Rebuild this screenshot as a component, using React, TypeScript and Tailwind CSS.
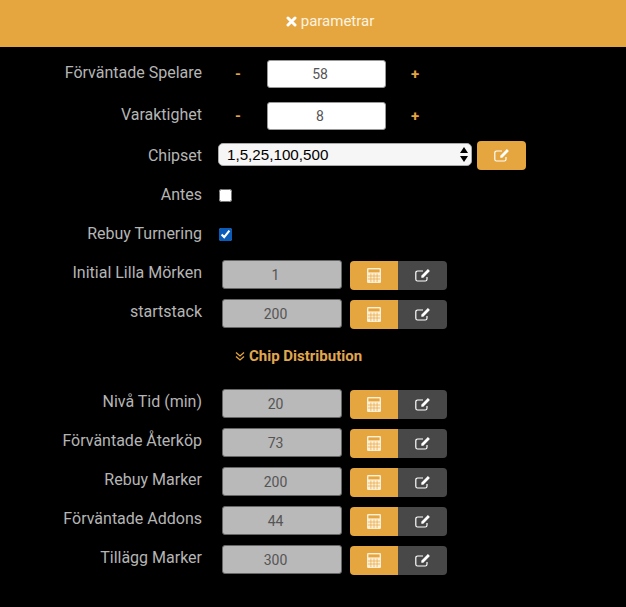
const CalcIcon = () => (
  <svg width="14" height="15" viewBox="0 0 14 15">
    <rect width="14" height="15" rx="1.2" fill="#fdf0d8" />
    <rect x="1.4" y="1.4" width="11.2" height="3" fill="#e5a63f" />
    <path d="M0.8 8h12.4M0.8 11h12.4M3.900 5.500v8.700M7 5.500v8.700M10.100 5.500v8.700" stroke="#e5a63f" strokeWidth="0.7" />
  </svg>
);

const EditIcon = () => (
  <svg width="16" height="14" viewBox="0 0 16 14" className="mb-[2px] fill-none stroke-white">
    <path d="M12 9v2.200a1.800 1.800 0 0 1-1.800 1.800H2.600A1.800 1.800 0 0 1 .8 11.200V4.800A1.800 1.800 0 0 1 2.600 3H8" strokeWidth="1.200" />
    <path d="M6.300 9.700V7.700L12.900 1.100 14.900 3.100 8.300 9.700z" className="fill-white stroke-none" />
  </svg>
);

const Label = ({ text, className }: { text: string; className?: string }) => (
  <label className={`block w-[202px] shrink-0 text-right text-[16px] leading-[20px] text-[#b5b5b5] ${className ?? ""}`}>
    {text}
  </label>
);

const StepperRow = ({ label, value }: { label: string; value: string }) => (
  <div className="flex items-center h-[28px] mb-[14px]">
    <Label text={label} className="mb-[2px]" />
    <span className="w-[65px] pl-[33px] text-[15px] font-bold text-[#e5a63f]">-</span>
    <input
      readOnly
      value={value}
      className="w-[119px] h-[28px] pr-[13px] rounded-[3px] bg-white text-center text-[14px] text-[#555] border border-[#999] outline-none"
    />
    <span className="ml-[25px] text-[15px] font-bold text-[#e5a63f]">+</span>
  </div>
);

const CalcRow = ({ label, value }: { label: string; value: string }) => (
  <div className="flex items-start h-[30px] mb-[9px]">
    <Label text={label} className="mt-[3px]" />
    <input
      readOnly
      value={value}
      className="ml-[20px] w-[120px] h-[29px] pr-[13px] rounded-[3px] bg-[#b9b9b9] text-center text-[14px] text-[#555] border border-[#666] outline-none"
    />
    <div className="ml-[8px] mt-[1px] flex h-[29px]">
      <button className="w-[48px] rounded-l-[4px] bg-[#e5a63f] flex items-center justify-center">
        <CalcIcon />
      </button>
      <button className="w-[49px] rounded-r-[4px] bg-[#484848] flex items-center justify-center">
        <EditIcon />
      </button>
    </div>
  </div>
);

export default function App() {
  return (
    <div className="w-[626px] h-[607px] bg-black overflow-hidden font-['Roboto',sans-serif]">
      <div className="h-[47px] pb-[4px] pl-[34px] bg-[#e5a63f] flex items-center justify-center text-[15px] text-[#fdf3e0]">
        <svg width="11" height="11" viewBox="0 0 11 11" fill="none" stroke="white" strokeWidth="3" strokeLinecap="round" className="mr-[4px]">
          <path d="M2 2l7 7M9 2l-7 7" />
        </svg>
        parametrar
      </div>

      <div className="pt-[13px]">
        <StepperRow label="Förväntade Spelare" value="58" />
        <StepperRow label="Varaktighet" value="8" />

        <div className="flex items-center h-[29px] -mt-[3px] mb-[15px]">
          <Label text="Chipset" />
          <div className="relative ml-[16px] mb-[2px] w-[254px] h-[23px]">
            <select className="appearance-none w-full h-full rounded-[5px] bg-[#f6f6f6] pl-[8px] text-[15.2px] text-black font-['Liberation_Sans',sans-serif] border border-[#aaa] outline-none">
              <option>1,5,25,100,500</option>
            </select>
            <svg width="8" height="15" viewBox="0 0 8 15" className="absolute right-[4px] top-[4px] fill-black">
              <path d="M4 0 8 6H0zM0 9h8l-4 6z" />
            </svg>
          </div>
          <button className="ml-[5px] w-[49px] h-[29px] rounded-[4px] bg-[#e5a63f] flex items-center justify-center">
            <EditIcon />
          </button>
        </div>

        <div className="flex items-center h-[20px] mb-[19px]">
          <Label text="Antes" />
          <input type="checkbox" className="ml-[17px] w-[13px] h-[13px]" />
        </div>
        <div className="flex items-center h-[20px] mb-[16px]">
          <Label text="Rebuy Turnering" />
          <input type="checkbox" defaultChecked className="ml-[17px] w-[13px] h-[13px] accent-[#0b5cb8]" />
        </div>

        <CalcRow label="Initial Lilla Mörken" value="1" />
        <CalcRow label="startstack" value="200" />

        <div className="flex items-center h-[20px] mt-[17px] mb-[23px] pl-[235px] text-[15px] font-bold text-[#e0a74f]">
          <svg width="10" height="10" viewBox="0 0 10 10" fill="none" stroke="#e5a63f" strokeWidth="1.3" className="mr-[4px]">
            <path d="M1 1.500 5 5l4-3.500M1 5.500 5 9l4-3.500" />
          </svg>
          Chip Distribution
        </div>

        <CalcRow label="Nivå Tid (min)" value="20" />
        <CalcRow label="Förväntade Återköp" value="73" />
        <CalcRow label="Rebuy Marker" value="200" />
        <CalcRow label="Förväntade Addons" value="44" />
        <CalcRow label="Tillägg Marker" value="300" />
      </div>
    </div>
  );
}
